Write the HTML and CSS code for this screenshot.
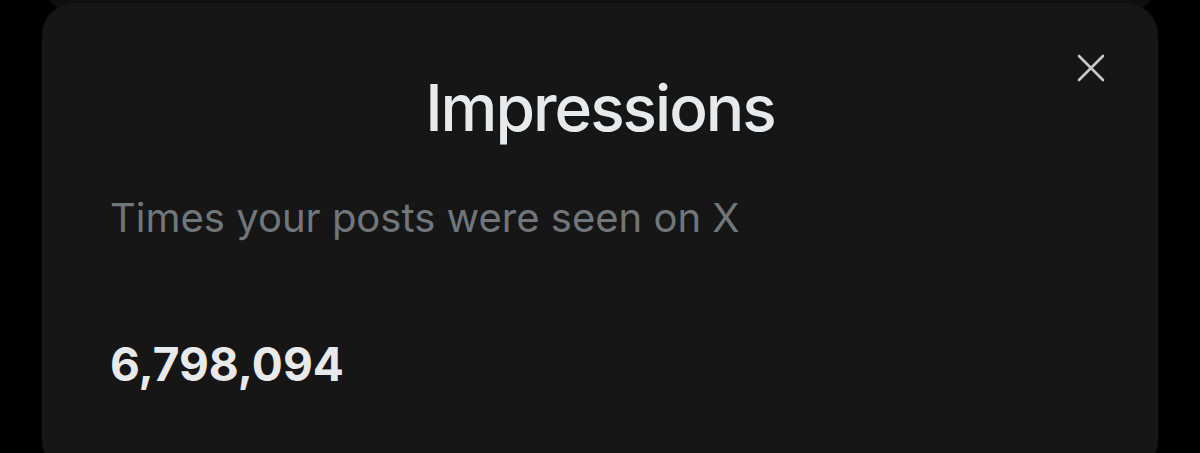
FILE: index.html
```html
<html>
    <head>
        <title>Impressions</title>
        <link rel="stylesheet" href="styles.css">
    </head>
    <body>
        <div class="sheet_back"></div>
        <div class="sheet">
            <button class="close_btn" type="button" aria-label="Close">
                <svg viewBox="0 0 28 28" width="28" height="28">
                    <path d="M2 2 L26 26 M26 2 L2 26" stroke="currentColor" stroke-width="2.6" stroke-linecap="round" fill="none"/>
                </svg>
            </button>
            <div class="title">Impressions</div>
            <div class="subtitle">Times your posts were seen on X</div>
            <div class="value">6,798,094</div>
        </div>
    </body>
</html>
```

FILE: styles.css
```css
body {

    margin: 0px;
    padding: 0px;
    background: #000000;
    overflow: hidden;
    font-family: "Inter", "Noto Sans", sans-serif;
}

div.sheet_back {

    position: absolute;
    left: 47px;
    right: 47px;
    top: -30px;
    height: 40px;

    border-radius: 30px;
    background: #0f0f10;
}

div.sheet {

    position: relative;

    height: 470px;
    margin: 3px 42px 0px 42px;
    padding: 0px 68px;

    border-radius: 32px;
    background: #161616;
    overflow: hidden;
}

button.close_btn {

    position: absolute;
    top: 51px;
    right: 53px;

    width: 28px;
    height: 28px;
    padding: 0px;

    border: none;
    background: none;
    color: #c9c9c9;
}

div.title {

    padding-top: 65px;

    text-align: center;
    font-size: 64px;
    font-weight: 500;
    letter-spacing: -2px;
    line-height: 80px;
    color: #e7e9ea;
}

div.subtitle {

    margin-top: 46px;

    font-size: 40px;
    line-height: 48px;
    color: #71767b;
}

div.value {

    margin-top: 94px;

    font-size: 46px;
    font-weight: 700;
    line-height: 56px;
    color: #e7e9ea;
}
```
